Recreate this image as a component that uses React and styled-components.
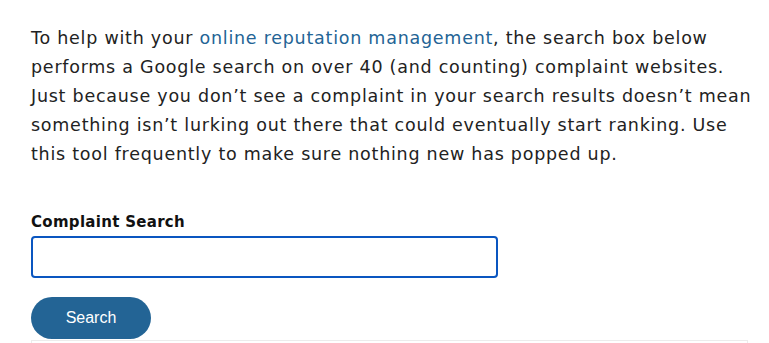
import React from 'react';
import styled, { createGlobalStyle } from 'styled-components';

const GlobalStyle = createGlobalStyle`
  html, body {
    margin: 0;
    padding: 0;
    background: #fff;
  }
  body {
    font-family: 'DejaVu Sans', 'Noto Sans', sans-serif;
    color: #222;
  }
`;

const Page = styled.div`
  padding: 24px 21px 0 31px;
  width: 717px;
`;

const Intro = styled.p`
  margin: 0;
  font-size: 17.5px;
  line-height: 29px;
  letter-spacing: 0.75px;
  white-space: nowrap;
  color: #222;

  a {
    color: #236495;
    text-decoration: none;
  }
`;

const SearchForm = styled.form`
  display: flex;
  flex-direction: column;
  align-items: flex-start;
  margin-top: 41px;
`;

const Label = styled.label`
  font-size: 15px;
  font-weight: 700;
  line-height: 24px;
  letter-spacing: 0.3px;
  color: #111;
  margin-bottom: 2px;
`;

const Input = styled.input`
  box-sizing: border-box;
  width: 467px;
  height: 42px;
  border: 2px solid #0a56c0;
  border-radius: 4px;
  padding: 0 10px;
  font-size: 16px;
  outline: none;
`;

const Button = styled.button`
  margin-top: 19px;
  width: 120px;
  height: 42px;
  border: none;
  border-radius: 21px;
  background: #236495;
  color: #fff;
  font-family: 'Liberation Sans', Arial, sans-serif;
  font-size: 16px;
  cursor: pointer;
`;

const Results = styled.div`
  margin-top: 1px;
  height: 20px;
  border: 1px solid #ececec;
  border-bottom: none;
  box-sizing: border-box;
`;

export default function App() {
  return (
    <>
      <GlobalStyle />
      <Page>
        <Intro>
          To help with your <a href="#">online reputation management</a>, the search box below
          <br />
          performs a Google search on over 40 (and counting) complaint websites.
          <br />
          Just because you don’t see a complaint in your search results doesn’t mean
          <br />
          something isn’t lurking out there that could eventually start ranking. Use
          <br />
          this tool frequently to make sure nothing new has popped up.
        </Intro>
        <SearchForm onSubmit={(e) => e.preventDefault()}>
          <Label htmlFor="complaint-search">Complaint Search</Label>
          <Input id="complaint-search" type="text" />
          <Button type="submit">Search</Button>
        </SearchForm>
        <Results />
      </Page>
    </>
  );
}
